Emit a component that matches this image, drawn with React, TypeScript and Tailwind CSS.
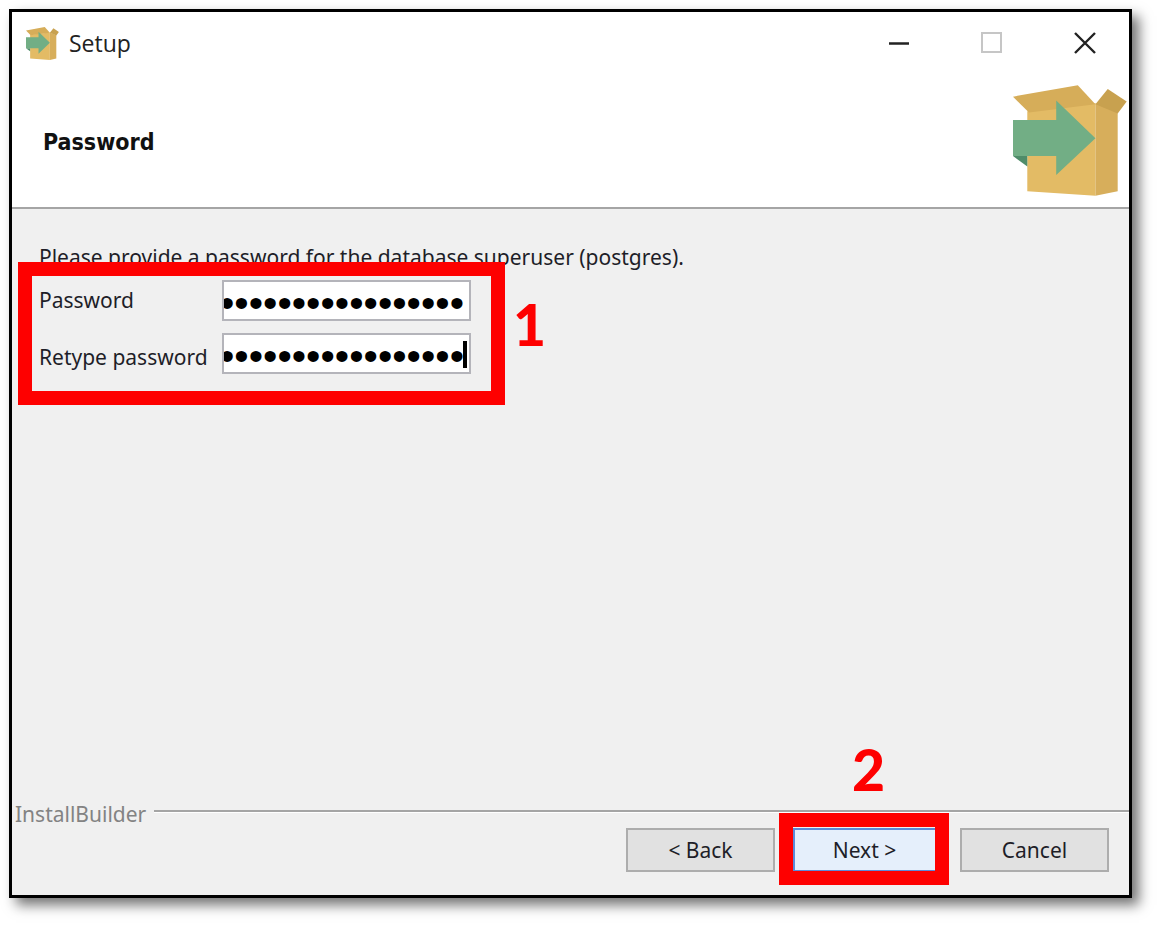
import { useState } from "react";

function BoxIcon({ className }: { className: string }) {
  return (
    <svg viewBox="70 45 343 334" className={className} preserveAspectRatio="none" aria-hidden="true">
      <polygon points="113,124 318,100 318,378 113,365" fill="#e3bb65" />
      <polygon points="318,100 385,128 385,365 318,378" fill="#d7ae5b" />
      <polygon points="70,80 265,46 318,103 118,128" fill="#d6ad59" />
      <polygon points="355,57 412,95 385,131 318,103" fill="#c8a14f" />
      <polygon points="70,259 113,259 113,290" fill="#4f8c69" />
      <polygon points="70,150 200,150 200,92 318,205 200,316 200,259 70,259" fill="#72ae85" />
    </svg>
  );
}

function TitleBar() {
  const control = "flex h-full w-[93px] items-center justify-center";
  return (
    <header className="flex h-[62px] items-center bg-white pl-[14px]">
      <BoxIcon className="h-[33px] w-[33px]" />
      <span className="ml-[10px] flex-1 font-['Open_Sans',sans-serif] text-[23px] text-[#222]">Setup</span>
      <div className="-mr-[2px] flex h-full">
        <button type="button" aria-label="Minimize" className={control}>
          <svg width="22" height="22" viewBox="0 0 22 22">
            <path d="M1 11.5H21" stroke="#222" strokeWidth="2.5" />
          </svg>
        </button>
        <button type="button" aria-label="Maximize" disabled className={control}>
          <svg width="22" height="22" viewBox="0 0 22 22" fill="none">
            <rect x="1" y="1" width="19" height="19" stroke="#c6c6c6" strokeWidth="2" />
          </svg>
        </button>
        <button type="button" aria-label="Close" className={control}>
          <svg width="22" height="22" viewBox="0 0 22 22">
            <path d="M1 1L21 21M21 1L1 21" stroke="#222" strokeWidth="2.4" />
          </svg>
        </button>
      </div>
    </header>
  );
}

function PasswordForm() {
  const [password, setPassword] = useState("a".repeat(17));
  const [retyped, setRetyped] = useState("a".repeat(17));
  const field =
    "block h-[41px] w-full border-2 border-[#b4b4ba] bg-white px-0 pb-0 pt-[6px] -indent-[4px] font-['Liberation_Sans',sans-serif] text-[41px] leading-[31px] text-black outline-none";
  return (
    <div className="relative flex w-[432px] items-start">
      <div className="flex w-[183px] flex-col">
        <label htmlFor="password" className="leading-[57px]">Password</label>
        <label htmlFor="retype" className="leading-[57px]">Retype password</label>
      </div>
      <div className="flex flex-1 flex-col gap-3 pt-2">
        <input id="password" type="password" value={password} onChange={(e) => setPassword(e.target.value)} className={field} />
        <div className="relative">
          <input id="retype" type="password" value={retyped} onChange={(e) => setRetyped(e.target.value)} className={field} />
          <span className="absolute right-1 top-2 h-[27px] w-1 bg-black" />
        </div>
      </div>
      <div className="pointer-events-none absolute -bottom-[19px] -left-[21px] -right-[34px] -top-[10px] border-[14px] border-[#fe0000]" />
      <span className="absolute left-full top-[17px] ml-[42px] font-['Lato',sans-serif] text-[57px] font-black leading-[70px] text-[#fe0000]">1</span>
    </div>
  );
}

export default function App() {
  const button = "h-[44px] w-[149px] border-2 border-[#adadad] bg-[#e1e1e1] pt-[2px]";
  return (
    <div className="flex min-h-screen bg-white pb-[29px] pl-[9px] pr-[29px] pt-[9px]">
      <main className="flex flex-1 flex-col border-[3px] border-black bg-[#f0f0f0] font-['Noto_Sans',sans-serif] text-[21px] text-[#1e1e28] shadow-[7px_7px_12px_rgba(0,0,0,0.55)]">
        <TitleBar />
        <section className="flex h-[135px] items-center justify-between border-b-2 border-[#a5a5a5] bg-white pl-[31px] pr-[2px]">
          <h1 className="pt-1 font-['DejaVu_Sans_Condensed','DejaVu_Sans',sans-serif] text-[23px] font-bold text-[#111]">Password</h1>
          <BoxIcon className="h-[111px] w-[114px]" />
        </section>
        <section className="flex-1 pl-[27px] pt-[33px]">
          <p className="leading-[30px]">Please provide a password for the database superuser (postgres).</p>
          <PasswordForm />
        </section>
        <footer className="pb-[23px]">
          <div className="flex h-[30px] items-center gap-2 pl-[3px] text-[#838383]">
            <span className="pt-[3px]">InstallBuilder</span>
            <div className="mb-[3px] h-[3px] flex-1 border-b border-white bg-[#a5a5a5]" />
          </div>
          <div className="flex justify-end gap-[18px] pr-5">
            <button type="button" className={button}>&lt; Back</button>
            <div className="relative">
              <button type="button" className="h-[44px] w-[149px] border-2 border-[#5c8ad8] bg-[#e5effb] pr-[6px] pt-[2px]">Next &gt;</button>
              <div className="pointer-events-none absolute -bottom-[13px] -left-[14px] -right-[7px] -top-[15px] border-[14px] border-[#fe0000]" />
              <span className="absolute bottom-full left-[59px] mb-[24px] font-['Lato',sans-serif] text-[57px] font-black leading-[70px] text-[#fe0000]">2</span>
            </div>
            <button type="button" className={button}>Cancel</button>
          </div>
        </footer>
      </main>
    </div>
  );
}
